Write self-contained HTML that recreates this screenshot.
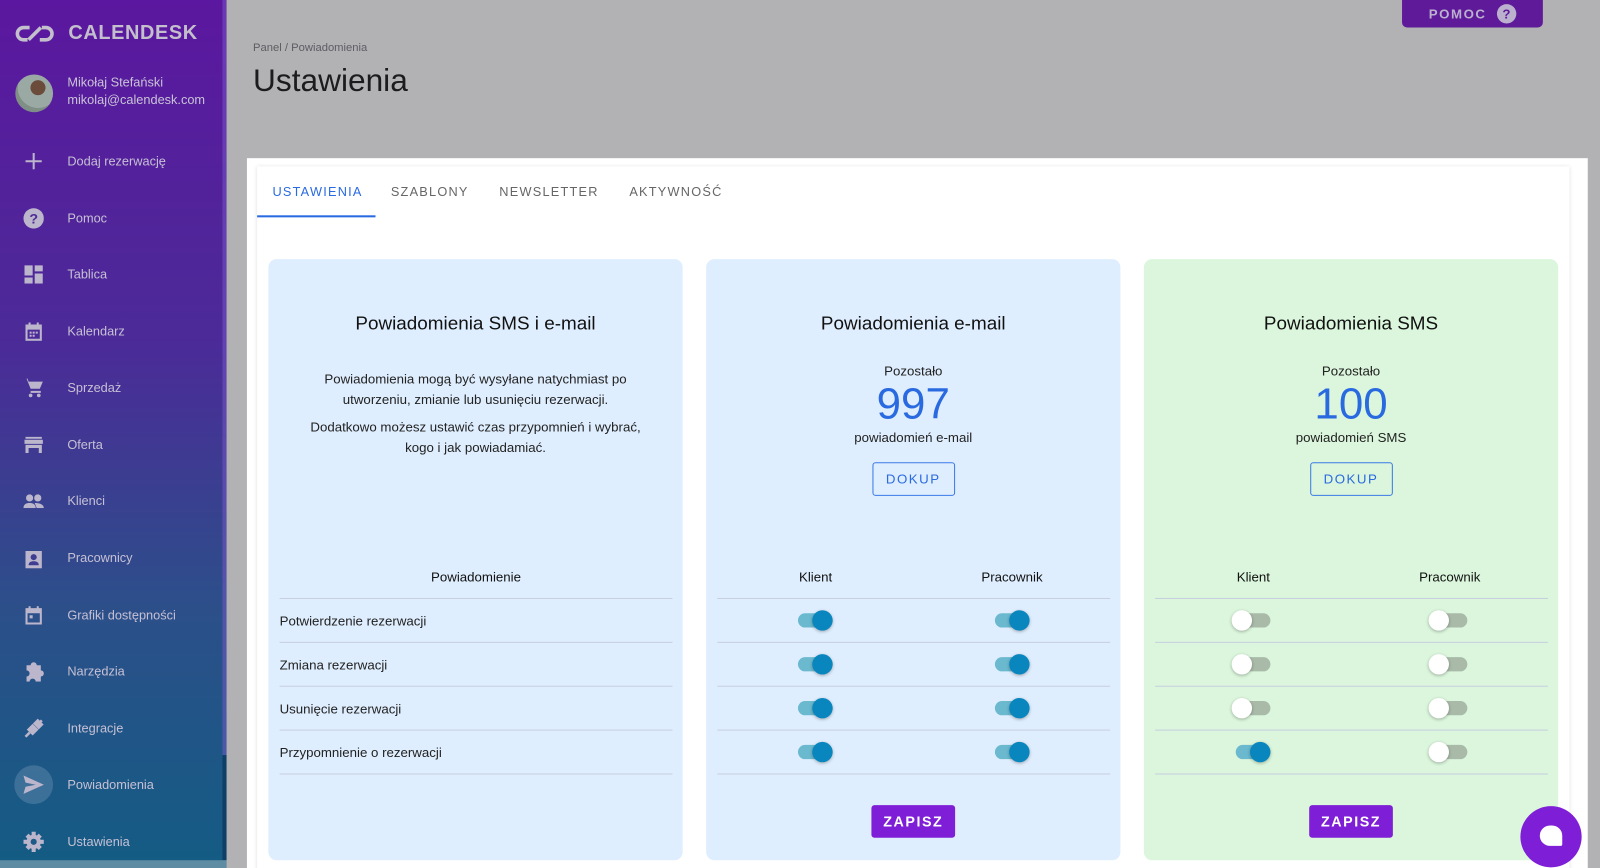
<!DOCTYPE html>
<html><head><meta charset="utf-8"><style>
*{box-sizing:border-box;margin:0;padding:0}
html,body{width:1600px;height:868px;overflow:hidden;background:#b2b1b4}
#z{position:relative;width:1568px;height:851px;transform:scale(1.02041);transform-origin:0 0;font-family:"Liberation Sans",Roboto,sans-serif}
.sb{position:absolute;left:0;top:0;width:222px;height:851px;background:linear-gradient(180deg,#5b179f 0%,#4b2b98 40%,#2c4f8a 70%,#135c84 100%);color:#c9c3d6}
.sb .bar{position:absolute;right:0;top:0;width:4px;height:740px;background:rgba(120,90,200,.5)}
.sb .bar2{position:absolute;right:0;top:740px;width:4px;height:103px;background:#0e3f66}
.sb .bot{position:absolute;left:0;top:843px;width:222px;height:25px;background:#5d8ca3}
.logo{position:absolute;left:15px;top:21px;display:flex;align-items:center;gap:14px;font-weight:bold;font-size:19.5px;letter-spacing:.6px;color:#c4bfcc}
.user{position:absolute;left:15px;top:73px;display:flex;gap:14px;font-size:12.5px;line-height:17px}
.av{width:37px;height:37px;border-radius:50%;background:radial-gradient(circle at 60% 35%,#6b4b3a 0 22%,#9aa9a4 23% 60%,#7f8f86 61%)}
.it{position:absolute;left:0;width:222px;height:40px;display:flex;align-items:center;font-size:12.5px;color:#c6c0d4}
.it .ic{width:66px;display:flex;justify-content:center;padding-right:0}
.it svg{fill:#bcb6cc}
.top{position:absolute;left:248px;top:41px}
.crumb{font-size:11px;color:#5e5d62}
h1{font-weight:normal;font-size:31px;color:#1c1c1e;margin-top:8px}
.pomoc{position:absolute;left:1374px;top:0;width:138px;height:27px;background:#5e1a99;border-radius:0 0 5px 5px;color:#bcb0cf;font-size:13px;font-weight:bold;letter-spacing:1.5px;display:flex;align-items:center;justify-content:center;gap:10px}
.pomoc b{width:19px;height:19px;border-radius:50%;background:#bcb0cf;color:#5e1a99;display:flex;align-items:center;justify-content:center;font-size:13px;letter-spacing:0}
.wrap{position:absolute;left:242px;top:155px;width:1314px;height:713px;background:#fff}
.inner{position:absolute;left:10px;top:8px;width:1286px;height:705px;background:#fff;box-shadow:0 0 4px rgba(0,0,0,.12)}
.tabs{position:absolute;left:0;top:0;height:50px;display:flex;font-size:12.5px;letter-spacing:1.2px;color:#666}
.tab{padding:18px 15px 0;height:50px}
.tab.a{color:#2a6ae0;border-bottom:2px solid #2a6ae0;width:116px}
.card{position:absolute;top:254px;width:406px;height:589px;border-radius:8px;background:#dfeefe}
.card.g{background:#dbf6dc}
.card h2{position:absolute;top:52px;width:100%;text-align:center;font-weight:normal;font-size:18.5px;color:#111}
.desc{position:absolute;top:108px;left:30px;right:30px;text-align:center;font-size:13px;line-height:20px;color:#222}
.desc p{margin-bottom:7px}
.rem{position:absolute;top:102px;width:100%;text-align:center;font-size:13px;color:#222}
.num{font-size:43px;color:#2a6ae0;line-height:44px;margin-top:3px;margin-bottom:3px}
.btn{display:inline-block;margin-top:17px;width:81px;height:33px;border:1px solid #3a78e6;border-radius:3px;color:#2a6ae0;font-size:13px;letter-spacing:1.5px;line-height:31px}
.tbl{position:absolute;left:11px;width:385px;top:297px}
.hd{height:36px;display:flex;font-size:13px;color:#111;border-bottom:1px solid #c7cfe0;align-items:flex-start;padding-top:7px}
.row{height:43px;display:flex;align-items:center;border-bottom:1px solid #c7cfe0;font-size:13px;color:#222}
.c{width:50%;display:flex;justify-content:center}
.t{position:relative;width:34px;height:14px;border-radius:7px;background:#6bb9cf}
.t::after{content:"";position:absolute;top:-3px;left:14px;width:20px;height:20px;border-radius:50%;background:#0a86bf;box-shadow:0 1px 3px rgba(0,0,0,.3)}
.t.off{background:#a9baa9}
.t.off::after{left:-4px;background:#fff}
.save{position:absolute;top:535px;left:162px;width:82px;height:32px;background:#7e1ed6;color:#fff;border-radius:3px;font-size:14px;font-weight:bold;letter-spacing:1.5px;text-align:center;line-height:32px}
.fab{position:absolute;left:1490px;top:790px;width:60px;height:60px;border-radius:50%;background:#7e1ed6}
.fab::after{content:"";position:absolute;left:19px;top:19px;width:22px;height:20px;background:#fff;border-radius:11px 11px 2px 11px}
</style></head><body><div id="z">
<div class="sb">
<div class="bar"></div><div class="bar2"></div><div class="bot"></div>
<div class="logo"><svg width="38" height="18" viewBox="0 0 38 18"><path d="M14 3H8a6 6 0 0 0 0 12h4M24 15h6a6 6 0 0 0 0-12h-4M13 15L25 3" stroke="#c4bfcc" stroke-width="3.5" fill="none"/></svg>CALENDESK</div>
<div class="user"><div class="av"></div><div>Mikołaj Stefański<br>mikolaj@calendesk.com</div></div>
<div class="it" style="top:138px"><div class="ic"><svg width="16" height="16"><path d="M7 0h2v7h7v2H9v7H7V9H0V7h7z"/></svg></div>Dodaj rezerwację</div>
<div class="it" style="top:194px"><div class="ic"><svg width="20" height="20"><circle cx="10" cy="10" r="10"/><text x="10" y="15" text-anchor="middle" font-size="14" font-weight="bold" fill="#4c2c98" font-family="Liberation Sans">?</text></svg></div>Pomoc</div>
<div class="it" style="top:249px"><div class="ic"><svg width="18" height="18"><path d="M0 0h8v10H0zM10 0h8v6h-8zM10 8h8v10h-8zM0 12h8v6H0z"/></svg></div>Tablica</div>
<div class="it" style="top:305px"><div class="ic"><svg width="18" height="18"><path d="M1 2h16v16H1zM3 7v9h12V7zM4 0h2v3H4zM12 0h2v3h-2zM5 9h2v2H5zM8 9h2v2H8zM11 9h2v2h-2zM5 12h2v2H5zM8 12h2v2H8z"/></svg></div>Kalendarz</div>
<div class="it" style="top:360px"><div class="ic"><svg width="20" height="20"><path d="M0 1h3l4 10h9l3-7H5L4 1zM7 13h10v2H7z"/><circle cx="7" cy="17.5" r="1.8"/><circle cx="15" cy="17.5" r="1.8"/></svg></div>Sprzedaż</div>
<div class="it" style="top:416px"><div class="ic"><svg width="18" height="16"><path d="M1 0h16v2H1zM0 3h18l1 4H-1zM1 8h16v8h-3v-5H4v5H1z"/></svg></div>Oferta</div>
<div class="it" style="top:471px"><div class="ic"><svg width="20" height="14"><circle cx="6" cy="4" r="3.5"/><circle cx="14" cy="4" r="3.5"/><path d="M0 14c0-4 3-5 6-5s6 1 6 5zM11 9c4 0 9 1 9 5h-7"/></svg></div>Klienci</div>
<div class="it" style="top:527px"><div class="ic"><svg width="18" height="20"><path d="M1 3h16v17H1z"/><circle cx="9" cy="9" r="3" fill="#3e3d92"/><path d="M4 17c0-3 2-4 5-4s5 1 5 4z" fill="#3e3d92"/></svg></div>Pracownicy</div>
<div class="it" style="top:583px"><div class="ic"><svg width="18" height="18"><path d="M1 2h16v16H1zM3 7v9h12V7zM4 0h2v3H4zM12 0h2v3h-2zM5 9h3v3H5z"/></svg></div>Grafiki dostępności</div>
<div class="it" style="top:638px"><div class="ic"><svg width="20" height="20"><path d="M3 4h4a3 3 0 0 1 6 0h4v5a3 3 0 0 1 0 6v5h-5a3 3 0 0 0-6 0H3v-5a3 3 0 0 0 0-6z"/></svg></div>Narzędzia</div>
<div class="it" style="top:694px"><div class="ic"><svg width="20" height="20"><path d="M2 18l4-4M18 2l-4 4M5 11l4-4 4 4-4 4zM11 5l3-3 4 4-3 3z" stroke="#bcb6cc" stroke-width="2.5" fill="#bcb6cc"/></svg></div>Integracje</div>
<div class="it" style="top:749px"><div class="ic"><div style="width:38px;height:38px;border-radius:50%;background:rgba(255,255,255,.15);display:flex;align-items:center;justify-content:center"><svg width="20" height="18"><path d="M0 0l20 9-20 9 2-7 10-2-10-2z"/></svg></div></div>Powiadomienia</div>
<div class="it" style="top:805px"><div class="ic"><svg width="20" height="20"><circle cx="10" cy="10" r="7"/><path d="M8 0h4v4H8zM8 16h4v4H8zM0 8h4v4H0zM16 8h4v4h-4zM2 5l3-3 3 3-3 3zM12 15l3-3 3 3-3 3zM2 15l3-3 3 3-3 3zM12 5l3-3 3 3-3 3z"/><circle cx="10" cy="10" r="3" fill="#1e5a86"/></svg></div>Ustawienia</div>
</div>
<div class="pomoc">POMOC <b>?</b></div>
<div class="top"><div class="crumb">Panel / Powiadomienia</div><h1>Ustawienia</h1></div>
<div class="wrap"><div class="inner">
<div class="tabs"><div class="tab a">USTAWIENIA</div><div class="tab">SZABLONY</div><div class="tab">NEWSLETTER</div><div class="tab">AKTYWNOŚĆ</div></div>
</div></div>

<div class="card" style="left:263px"><h2>Powiadomienia SMS i e-mail</h2>
<div class="desc"><p>Powiadomienia mogą być wysyłane natychmiast po utworzeniu, zmianie lub usunięciu rezerwacji.</p><p>Dodatkowo możesz ustawić czas przypomnień i wybrać, kogo i jak powiadamiać.</p></div>
<div class="tbl"><div class="hd"><div style="width:100%;text-align:center">Powiadomienie</div></div>
<div class="row">Potwierdzenie rezerwacji</div><div class="row">Zmiana rezerwacji</div><div class="row">Usunięcie rezerwacji</div><div class="row">Przypomnienie o rezerwacji</div></div></div>

<div class="card" style="left:692px"><h2>Powiadomienia e-mail</h2>
<div class="rem">Pozostało<div class="num">997</div>powiadomień e-mail<br><span class="btn">DOKUP</span></div>
<div class="tbl"><div class="hd"><div class="c">Klient</div><div class="c">Pracownik</div></div>
<div class="row"><div class="c"><div class="t"></div></div><div class="c"><div class="t"></div></div></div>
<div class="row"><div class="c"><div class="t"></div></div><div class="c"><div class="t"></div></div></div>
<div class="row"><div class="c"><div class="t"></div></div><div class="c"><div class="t"></div></div></div>
<div class="row"><div class="c"><div class="t"></div></div><div class="c"><div class="t"></div></div></div></div>
<div class="save">ZAPISZ</div></div>

<div class="card g" style="left:1121px"><h2>Powiadomienia SMS</h2>
<div class="rem">Pozostało<div class="num">100</div>powiadomień SMS<br><span class="btn">DOKUP</span></div>
<div class="tbl"><div class="hd"><div class="c">Klient</div><div class="c">Pracownik</div></div>
<div class="row"><div class="c"><div class="t off"></div></div><div class="c"><div class="t off"></div></div></div>
<div class="row"><div class="c"><div class="t off"></div></div><div class="c"><div class="t off"></div></div></div>
<div class="row"><div class="c"><div class="t off"></div></div><div class="c"><div class="t off"></div></div></div>
<div class="row"><div class="c"><div class="t"></div></div><div class="c"><div class="t off"></div></div></div></div>
<div class="save">ZAPISZ</div></div>
<div class="fab"></div>
</div></body></html>
